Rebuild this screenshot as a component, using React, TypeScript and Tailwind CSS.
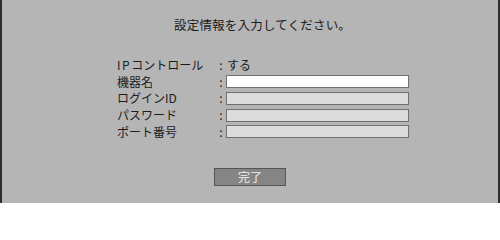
import React from 'react';

const rows: { label: React.ReactNode; key: string; value?: string; active?: boolean }[] = [
  { key: 'ip', label: <><span className="tracking-[1.5px]">IP</span>コントロール</>, value: 'する' },
  { key: 'name', label: '機器名', active: true },
  { key: 'login', label: 'ログインID' },
  { key: 'pass', label: 'パスワード' },
  { key: 'port', label: 'ポート番号' },
];

const App: React.FC = () => {
  return (
    <div className="w-[500px] h-[203px] bg-[#b5b5b5] border-x-2 border-[#2e2e2e] flex flex-col items-center font-['Noto_Sans_CJK_JP',sans-serif] text-[#1c1c1c]">
      <h1 className="self-start ml-[172px] pt-[17px] text-[12.5px] leading-[16px] tracking-[0.2px]">設定情報を入力してください。</h1>
      <div className="self-start ml-[115px] mt-[23.6px] grid grid-cols-[99px_10px_183px] auto-rows-[16.75px] text-[12px] leading-[14px]">
        {rows.map((r) => (
          <React.Fragment key={r.key}>
            <div className="flex items-center">{r.label}</div>
            <div className="flex items-center justify-center">:</div>
            <div className="flex items-center">
              {r.value ? (
                <span className="pl-[1px]">{r.value}</span>
              ) : (
                <div
                  className={
                    r.active
                      ? 'w-[183px] h-[13px] bg-white border border-[#707070]'
                      : 'w-[183px] h-[13px] bg-[#dcdcdc] border border-[#707070]'
                  }
                />
              )}
            </div>
          </React.Fragment>
        ))}
      </div>
      <button className="mt-[27.6px] w-[72px] h-[18px] bg-[#858585] border-[1.5px] border-[#555] text-[#f2f2f2] text-[12px] leading-[14px] flex items-center justify-center">
        完了
      </button>
    </div>
  );
};

export default App;
